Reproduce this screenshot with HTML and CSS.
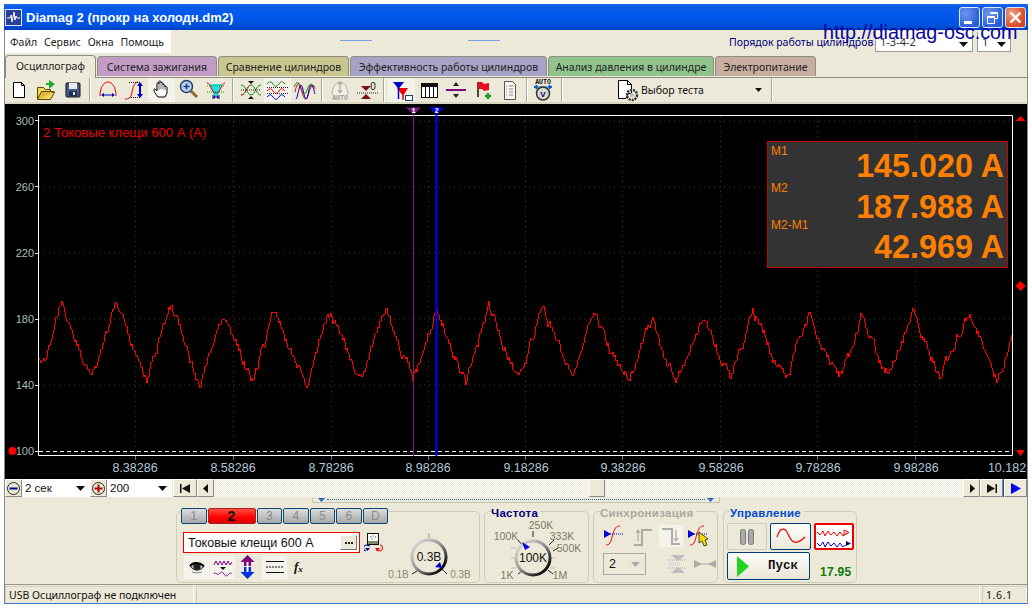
FILE: index.html
```html
<!DOCTYPE html>
<html lang="ru">
<head>
<meta charset="utf-8">
<title>Diamag 2</title>
<link rel="stylesheet" href="styles.css">
</head>
<body>
<div class="window">
  <header class="titlebar">
    <svg class="appicon" width="17" height="17" viewBox="0 0 17 17"><rect x=".5" y=".5" width="16" height="16" fill="#2a3f9a" stroke="#dfe6f5"/><path d="M2 9h3l1-3 1 7 2-10 1 8 1-4 1 2h3" fill="none" stroke="#fff"/></svg>
    <span class="apptitle">Diamag 2 (прокр на холодн.dm2)</span>
    <div class="winbtns">
      <span class="winbtn"><svg width="19" height="19" viewBox="0 0 19 19"><rect x="4" y="13" width="8" height="3" fill="#fff"/></svg></span>
      <span class="winbtn"><svg width="19" height="19" viewBox="0 0 19 19"><path d="M7.5 4.5h7v6h-3M4.5 8.5h7v7h-7zM4.5 9.5h7M7.5 5.5h7" fill="none" stroke="#fff"/></svg></span>
      <span class="winbtn close"><svg width="19" height="19" viewBox="0 0 19 19"><path d="M4.5 4.5l10 10M14.5 4.5l-10 10" stroke="#fff" stroke-width="2.4"/></svg></span>
    </div>
  </header>
  <div class="watermark">http://diamag-osc.com</div>

  <div class="menurow">
    <nav class="menu"><span>Файл</span><span>Сервис</span><span>Окна</span><span>Помощь</span></nav>
    <i class="dash dash1"></i><i class="dash dash2"></i>
    <span class="order">Порядок работы цилиндров</span>
    <span class="select order1">1-3-4-2<svg class="arrow" width="9" height="5"><path d="M0 0h9L4.500 5z" fill="#111"/></svg></span>
    <span class="select order2">1<svg class="arrow" width="9" height="5"><path d="M0 0h9L4.500 5z" fill="#111"/></svg></span>
  </div>

  <div class="tabs">
    <span class="tab active">Осциллограф</span>
    <span class="tab t2">Система зажигания</span>
    <span class="tab t3">Сравнение цилиндров</span>
    <span class="tab t4">Эффективность работы цилиндров</span>
    <span class="tab t5">Анализ давления в цилиндре</span>
    <span class="tab t6">Электропитание</span>
  </div>

  <div class="toolbar">
    <div class="tbgroup">
      <span class="tb"><svg width="24" height="24"><path d="M6.500 4.500h8l3 3v12h-11z" fill="#fff" stroke="#000"/><path d="M14.500 4.500v3h3" fill="none" stroke="#000"/></svg></span>
      <span class="tb"><svg width="24" height="24"><path d="M3.500 9.500h6l2 2h5v3h4l-4 7h-13z" fill="#f2d65c" stroke="#5c4a00"/><path d="M3.500 21.500l4-8h13" fill="#e0b93a" stroke="#5c4a00"/><path d="M15 11V7h-3V5h3V2l6 4-6 5z" fill="#22a82c"/></svg></span>
      <span class="tb"><svg width="24" height="24"><rect x="5" y="5" width="14" height="14" rx="1" fill="#4a5a86" stroke="#111"/><rect x="8" y="5" width="8" height="6" fill="#e8e8e8"/><rect x="8" y="13" width="8" height="5" fill="#22304f"/><rect x="12" y="14" width="2" height="3" fill="#dde"/></svg></span>
    </div><i class="sep"></i>
    <div class="tbgroup">
      <span class="tb"><svg width="24" height="24"><path d="M4 18C4 9 8 4 12 4s8 5 8 14" fill="none" stroke="#e00"/><path d="M5 17l3-2v1.500h8V15l3 2-3 2v-1.500H8V19z" fill="#00c"/></svg></span>
      <span class="tb"><svg width="24" height="24"><path d="M2 21c4 0 6-1 7-7s3-10 6-10" fill="none" stroke="#e00"/><path d="M6 4.500h12M6 19.500h12" stroke="#222" stroke-dasharray="1 1"/><path d="M16 12V8h-2l3-4 3 4h-2v8h2l-3 4-3-4h2z" fill="#00c"/></svg></span>
      <span class="tb sunken"><svg width="24" height="24"><path d="M8 19c-2-3-4-5-4-7s2-1 3 1V6c0-2 2-2 2 0v-2c0-2 2-1 2 0v1c0-1 2-1 2 1v1c0-1 2-1 2 1v1c0-1 2-1 2 1v5l-2 4z" fill="#fff" stroke="#000"/><path d="M9 6v6M11 5v6M13 6v5M15 8v4" stroke="#000" stroke-width=".6"/></svg></span>
      <span class="tb"><svg width="24" height="24"><circle cx="9.500" cy="8.500" r="6" fill="#b9d0ee" stroke="#23406e" stroke-width="1.500"/><path d="M6.500 8.500h6M9.500 5.500v6" stroke="#1c3f8c" stroke-width="1.500"/><path d="M14 13l6 6" stroke="#8a6a30" stroke-width="3"/></svg></span>
      <span class="tb"><svg width="24" height="24"><path d="M6 6h12l-2 7-2 5H10l-2-5z" fill="#22e0e8"/><path d="M3 8h18M3 14h18" stroke="#0a0" stroke-dasharray="1 1"/><path d="M3 5c4 0 4 10 9 10s5-10 9-10" fill="none" stroke="#e00"/><path d="M9 17v4M15 17v4" stroke="#111"/><path d="M9 19l2-2v1.500h2V17l2 2-2 2v-1.500h-2V21z" fill="#00c"/></svg></span>
    </div><i class="sep"></i>
    <div class="tbgroup">
      <span class="tb"><svg width="24" height="24"><path d="M2 7c5 0 6 10 10 10s5-10 10-10M2 17c5 0 6-10 10-10s5 10 10 10" fill="none" stroke="#0a8a0a"/><path d="M2 17c5 0 6-10 10-10" fill="none" stroke="#e00" stroke-dasharray="3 2"/><path d="M2 12h20" stroke="#222" stroke-dasharray="1 1"/><path d="M9 3h6l-3 3zM9 21h6l-3-3z" fill="#111"/></svg></span>
      <span class="tb sunken"><svg width="24" height="24"><path d="M1 6c3-3 4-3 6 0s4 3 6 0 3-3 6 0" fill="none" stroke="#0a8a0a"/><path d="M1 9.500h21M1 15.500h21" stroke="#222" stroke-dasharray="1 1"/><path d="M1 13c3-3 4-3 6 0s4 3 6 0 3-3 6 0" fill="none" stroke="#e00"/><path d="M1 19c3-3 4-3 6 0s4 3 6 0 3-3 6 0" fill="none" stroke="#00d"/></svg></span>
      <span class="tb"><svg width="24" height="24"><path d="M1 9c3-7 5-5 7 1s4 8 6 2 4-8 8-3" fill="none" stroke="#0a8a0a"/><path d="M2 14c2-10 4-10 6-3s3 10 5 10 3-9 5-12 3 0 4 2" fill="none" stroke="#e00"/><path d="M3 21c2-2 3-14 5-14s3 14 5 14 3-14 5-14 3 6 4 9" fill="none" stroke="#00c"/></svg></span>
    </div><i class="sep"></i>
    <div class="tbgroup">
      <span class="tb"><svg width="24" height="24"><path d="M4 17C4 9 8 4 12 4s8 5 8 13" fill="#f0eee2" stroke="#aaa"/><path d="M12 5v9M10 7l2-3 2 3M10 12l2 3 2-3" fill="none" stroke="#999"/><text x="12" y="22" class="autotext dim">AUTO</text></svg></span>
      <span class="tb"><svg width="24" height="24"><path d="M6 9h10l-5 5z" fill="#7a1010" transform="translate(0 -1)"/><path d="M6 21h10l-5-5z" fill="#7a1010"/><path d="M2 15h22" stroke="#222" stroke-dasharray="1 1"/><text x="18" y="12" class="zero">0</text></svg></span>
    </div><i class="sep"></i>
    <div class="tbgroup">
      <span class="tb sunken"><svg width="24" height="24"><path d="M3 4h11l-5.500 7z" fill="#00c"/><path d="M7 10h11l-5 8z" fill="#e00"/><path d="M8.500 10v11" stroke="#00c" stroke-width="1.500"/><path d="M13 17v5" stroke="#e00" stroke-width="1.500"/><rect x="15.500" y="17.500" width="7" height="5" fill="#fff" stroke="#246"/></svg></span>
      <span class="tb"><svg width="24" height="24"><rect x="4.500" y="5.500" width="16" height="14" fill="#fff" stroke="#111"/><path d="M4 6h17v3H4z" fill="#111"/><path d="M8.500 9v10M12.500 9v10M16.500 9v10" stroke="#111"/></svg></span>
      <span class="tb"><svg width="24" height="24"><path d="M2 12h20" stroke="#800080" stroke-width="2"/><path d="M9 8h6l-3-4zM9 16h6l-3 4z" fill="#222"/></svg></span>
      <span class="tb"><svg width="24" height="24"><path d="M7 4v15" stroke="#111" stroke-width="1.500"/><path d="M7 4h4l2 2 5-1v7l-5 1-2-2H7z" fill="#e8101e"/><path d="M14 18h6M17 15v6" stroke="#1a9a20" stroke-width="2.400"/></svg></span>
      <span class="tb"><svg width="24" height="24"><path d="M6.500 3.500h8l3 3v15h-11z" fill="#f7f6ef" stroke="#555"/><path d="M8 8h1M11 8h4M8 11h1M11 11h4M8 14h1M11 14h4M8 17h1M11 17h4" stroke="#888"/></svg></span>
    </div><i class="sep"></i>
    <div class="tbgroup g6">
      <span class="tb"><svg width="24" height="24"><text x="12" y="6" class="autotext">AUTO</text><path d="M3 9h18M3 9l3-2v4zM21 9l-3-2v4z" fill="#00c" stroke="#06c"/><circle cx="12" cy="15.500" r="6.500" fill="#d9d7c8" stroke="#333" stroke-width="1.500"/><text x="12" y="18.500" class="vtext">V</text></svg></span>
    </div><i class="sep sep6"></i>
    <div class="testsel">
      <svg class="testico" width="26" height="24"><path d="M3.500 2.500h9l4 4v9h-3l-3 5h-7z" fill="#fff" stroke="#000"/><path d="M12.500 2.500v4h4" fill="none" stroke="#000"/><circle cx="17" cy="17" r="5" fill="none" stroke="#333" stroke-width="2.500" stroke-dasharray="2 1"/><circle cx="17" cy="17" r="2" fill="#bbb"/></svg>
      <span class="testlabel">Выбор теста</span>
      <svg class="testarrow" width="7" height="4"><path d="M0 0h7L3.500 4z" fill="#111"/></svg>
    </div><i class="sep"></i>
  </div>

  <section class="scope">
    <svg class="plot" width="1022" height="375" viewBox="5 104 1022 375">
      <rect x="5" y="104" width="1022" height="375" fill="#000"/>
      <g class="grid">
        <path d="M39 121H1012M39 187H1012M39 253H1012M39 319H1012M39 385H1012"/>
        <path d="M135.500 116V455M233.500 116V455M331.500 116V455M428.500 116V455M525.500 116V455M622.500 116V455M720.500 116V455M817.500 116V455M915.500 116V455"/>
      </g>
      <polyline id="trace" class="trace" points=""/>
      <path d="M38.500 115.500H1012.500V455.500H38.500z" fill="none" stroke="#fff"/>
      <path d="M39 451.500H1012" stroke="#fff" stroke-dasharray="4 3"/>
      <path d="M35 120.500h3M35 186.500h3M35 253.500h3M35 319.500h3M35 385.500h3M35 451.500h3" stroke="#ddd"/>
      <path d="M135.500 456v4M233.500 456v4M331.500 456v4M428.500 456v4M525.500 456v4M622.500 456v4M720.500 456v4M817.500 456v4M915.500 456v4" stroke="#777"/>
      <g class="ylabels">
        <text x="34" y="125">300</text><text x="34" y="191">260</text><text x="34" y="257">220</text>
        <text x="34" y="323">180</text><text x="34" y="389">140</text><text x="34" y="455">100</text>
      </g>
      <g class="xlabels">
        <text x="135" y="472">8.38286</text><text x="233" y="472">8.58286</text><text x="331" y="472">8.78286</text>
        <text x="428" y="472">8.98286</text><text x="526" y="472">9.18286</text><text x="623" y="472">9.38286</text>
        <text x="721" y="472">9.58286</text><text x="818" y="472">9.78286</text><text x="916" y="472">9.98286</text><text x="1014" y="472">10.18286</text>
      </g>
      <path d="M413.500 107V456" stroke="#7a1f7a"/>
      <path d="M436.500 107V456" stroke="#0000ff" stroke-width="2"/>
      <path d="M406 107.500h15l-7.500 7z" fill="#7a1f7a"/>
      <path d="M429 107.500h15l-7.500 7z" fill="#0000ee"/>
      <text x="413.500" y="113" class="curnum">1</text>
      <text x="436.500" y="113" class="curnum">2</text>
      <text x="43" y="137" class="chname">2 Токовые клещи 600 А (А)</text>
      <path d="M1020.500 116l5 5h-10z" fill="#f00"/>
      <path d="M1020.500 281l5 5-5 5-5-5z" fill="#f00"/>
      <path d="M1016 450h9l-4.500 6z" fill="#f00"/>
      <circle cx="12.500" cy="451" r="4" fill="#f00"/>
    </svg>
    <div class="measure">
      <div class="mlabels"><span>M1</span><span>M2</span><span>M2-M1</span></div>
      <div class="mvals"><span>145.020 A</span><span>187.988 A</span><span>42.969 A</span></div>
    </div>
  </section>

  <div class="transport">
    <span class="roundbtn"><svg width="15" height="15"><circle cx="7.500" cy="7.500" r="6" fill="#ece9d8" stroke="#222"/><rect x="3.500" y="6.500" width="8" height="2" fill="#00008b"/></svg></span>
    <span class="tsel w68">2 сек<svg class="arrow" width="9" height="5"><path d="M0 0h9L4.500 5z" fill="#111"/></svg></span>
    <span class="roundbtn"><svg width="15" height="15"><circle cx="7.500" cy="7.500" r="6" fill="#ece9d8" stroke="#222"/><path d="M3.500 7.500h8M7.500 3.500v8" stroke="#a00" stroke-width="2"/></svg></span>
    <span class="tsel w64">200<svg class="arrow" width="9" height="5"><path d="M0 0h9L4.500 5z" fill="#111"/></svg></span>
    <span class="sbtn w22"><svg width="12" height="9"><path d="M1 0h1.500v9H1zM11 0v9L3 4.500z" fill="#111"/></svg></span>
    <span class="sbtn w17"><svg width="6" height="9"><path d="M5 0v9L0 4.500z" fill="#111"/></svg></span>
    <div class="track"><span class="thumb"></span></div>
    <span class="sbtn w17"><svg width="6" height="9"><path d="M1 0v9l5-4.500z" fill="#111"/></svg></span>
    <span class="sbtn w23"><svg width="12" height="9"><path d="M11 0H9.500v9H11zM1 0v9l8-4.500z" fill="#111"/></svg></span>
    <span class="sbtn w23 play"><svg width="10" height="11"><path d="M0 0v11l10-5.500z" fill="#0000f0"/></svg></span>
  </div>

  <div class="lower">
    <div class="splitter"><svg class="sp-l" width="7" height="4"><path d="M0 0h7L3.500 4z" fill="#2468c8"/></svg><i class="sp-dots"></i><svg class="sp-r" width="7" height="4"><path d="M0 0h7L3.500 4z" fill="#2468c8"/></svg></div>
    <div class="panels">
      <div class="panel pch">
        <div class="chleft">
          <div class="chtabs">
            <span class="chtab">1</span><span class="chtab on">2</span><span class="chtab">3</span><span class="chtab">4</span><span class="chtab">5</span><span class="chtab">6</span><span class="chtab">D</span>
          </div>
          <div class="chcombo-row">
            <div class="chcombo"><span>Токовые клещи 600 А</span><b class="dots"><i></i><i></i><i></i></b></div>
            <svg width="20" height="20" viewBox="0 0 20 20"><rect x="3.500" y=".5" width="11" height="11" fill="#fff" stroke="#111"/><path d="M4 8h10v3H4z" fill="#7a8a70"/><path d="M6 3l3 4M9 2v2M12 3l-1 2" stroke="#555" stroke-width=".7"/><path d="M2 18a2.500 3 0 0 1 0-6l4 1" fill="none" stroke="#00a"/><path d="M16 12a2.500 3 0 0 1 0 6l-4-1" fill="none" stroke="#e00"/><path d="M1 15h5l-2.500 3z" fill="#00a"/><path d="M11 15h5l-2.500 3z" fill="#e00"/></svg>
          </div>
          <div class="chtools">
            <span class="ctool sunken"><svg width="20" height="14"><path d="M3 6c3-4 9-4 14 0-3 5-10 6-14 0z" fill="#bbb" stroke="#111"/><circle cx="10" cy="6.500" r="3.500" fill="#222"/><path d="M3 6c3-4 9-4 14 0" fill="none" stroke="#000" stroke-width="2"/><path d="M5 12c2 1 8 1 10 0" stroke="#888" fill="none"/></svg></span>
            <span class="ctool sunken"><svg width="20" height="20"><path d="M1 8l2-4 2 4 2-4 2 4 2-4 2 4 2-4 2 4 2-3" fill="none" stroke="#800080"/><path d="M1 17c2-3 3 2 5 0s3-3 5 0 3 2 5 0 2-1 3 0" fill="none" stroke="#800080"/><path d="M7 10h6l-3 3z" fill="#111"/></svg></span>
            <span class="cicon"><svg width="17" height="24"><path d="M8.500 0l7 7H12v4H5V7H1.500z" fill="#800080"/><path d="M8.500 24l-7-7H5v-5h7v5h3.500z" fill="#0030e0"/><rect x="7.500" y="7" width="2" height="10" fill="#fff"/></svg></span>
            <span class="ctool sunken lines"><svg width="20" height="18"><path d="M1 3.500h18M1 14.500h18" stroke="#111"/><path d="M1 9h18" stroke="#111" stroke-dasharray="2 1"/></svg></span>
            <span class="fx"><i>f</i><sub>x</sub></span>
          </div>
        </div>
        <svg class="knob k1" width="92" height="52" viewBox="385 530 92 52">
          <defs><linearGradient id="ring" x1="0" y1="0" x2="1" y2="1"><stop offset="0" stop-color="#e8e8e8"/><stop offset=".45" stop-color="#999"/><stop offset=".85" stop-color="#111"/><stop offset="1" stop-color="#000"/></linearGradient></defs>
          <path d="M429 533v5" stroke="#999"/>
          <path d="M412 574l5-3M442 569l5 5" stroke="#222"/>
          <circle cx="429" cy="557" r="17" fill="#ece9d8" stroke="url(#ring)" stroke-width="3"/>
          <path d="M440 562l2 6-7-1z" fill="#0000e0"/>
          <text x="429" y="561" class="ktext">0.3В</text>
          <text x="398.500" y="578" class="klabel">0.1В</text>
          <text x="460.500" y="578" class="klabel">0.3В</text>
        </svg>
      </div>

      <div class="panel pfreq">
        <div class="ptitle navy">Частота</div>
        <svg class="knob k2" width="100" height="64" viewBox="487 518 100 64">
          <g stroke="#bbb"><path d="M511 547h5M511 557h5M511 567h5M550 547h5M550 557h5M550 567h5"/></g>
          <g stroke="#222"><path d="M533 530v6M518 539l5 6M549 544l5-5M553 550l5-3M518 573l5-4M548 569l5 4"/></g>
          <circle cx="533" cy="557" r="17" fill="#ece9d8" stroke="url(#ring)" stroke-width="3"/>
          <path d="M522 541l3 8 5-3z" fill="#0000e0"/>
          <text x="533" y="561" class="ktext">100K</text>
          <g class="klabel2">
            <text x="506" y="539">100K</text><text x="541" y="528">250K</text><text x="562" y="539">333K</text>
            <text x="569" y="551">500K</text><text x="507" y="578">1K</text><text x="560" y="578">1M</text>
          </g>
        </svg>
      </div>

      <div class="panel psync">
        <div class="ptitle gray">Синхронизация</div>
        <div class="syncrow">
          <span class="sico"><svg width="24" height="22"><path d="M3 20c5 0 5-5 7-11s3-8 7-8" fill="none" stroke="#e00"/><path d="M7 9h14" stroke="#00c" stroke-dasharray="1 1"/><path d="M1 5l7 4-7 4z" fill="#00c"/></svg></span>
          <span class="sico"><svg width="24" height="22"><path d="M3 20h8V5h10" fill="none" stroke="#aaa" stroke-width="2"/><path d="M7 5v11M5 8l2-3 2 3" fill="none" stroke="#999"/></svg></span>
          <span class="sico sunken"><svg width="24" height="22"><path d="M3 4h10v15h8" fill="none" stroke="#aaa" stroke-width="2"/><path d="M17 5v11M15 13l2 3 2-3" fill="none" stroke="#999"/></svg></span>
          <span class="sico"><svg width="24" height="22"><path d="M3 20c5 0 5-5 7-11s3-8 7-8" fill="none" stroke="#e00"/><path d="M7 9h14" stroke="#00c" stroke-dasharray="1 1"/><path d="M1 5l7 4-7 4z" fill="#00c"/><path d="M12 7l9 7-3 1 2 5-3 1-2-5-3 2z" fill="#ffd800" stroke="#222" stroke-width=".8"/></svg></span>
        </div>
        <div class="syncrow second">
          <span class="syncsel">2<svg width="9" height="5"><path d="M0 0h9L4.500 5z" fill="#aaa"/></svg></span>
          <span class="sico"><svg width="24" height="22"><path d="M3 7h17M3 15h17" stroke="#aaa" stroke-dasharray="1 1"/><path d="M6 2h14l-7 6zM6 20h14l-7-6z" fill="#bbb"/><path d="M3 11h12" stroke="#ddd" stroke-width="3"/></svg></span>
          <span class="sico"><svg width="24" height="22"><path d="M1 7l8 4-8 4zM23 7l-8 4 8 4z" fill="#aaa"/><path d="M4 11h16" stroke="#aaa"/></svg></span>
        </div>
      </div>

      <div class="panel pctl">
        <div class="ptitle blue">Управление</div>
        <div class="ctlrow">
          <span class="cbtn flat"><svg width="14" height="16"><rect x=".5" y=".5" width="5" height="15" rx="2" fill="#aaa" stroke="#777"/><rect x="8.500" y=".5" width="5" height="15" rx="2" fill="#aaa" stroke="#777"/></svg></span>
          <span class="cbtn navyb"><svg width="30" height="22"><path d="M1 11C4 1 9 1 12 8s7 13 17 3" fill="none" stroke="#e00" stroke-width="1.200"/></svg></span>
          <span class="cbtn redb"><svg width="36" height="22"><path d="M1 6l3 3 3-4 2 5 3-5 3 4 3-3 3 4 3-4 3 4 4-3M28 4v5l5-2.500z" fill="none" stroke="#e00"/><path d="M1 17l3 3 3-4 2 5 3-5 3 4 3-3 3 4 3-4 3 4 4-3" fill="none" stroke="#00c"/><path d="M30 15v5l5-2.500z" fill="#005"/></svg></span>
        </div>
        <div class="ctlrow run">
          <span class="startbtn"><svg width="12" height="21"><path d="M0 0v21l12-10.500z" fill="#22d422"/></svg><b>Пуск</b></span>
          <span class="fps">17.95</span>
        </div>
      </div>
    </div>
  </div>

  <footer class="status">
    <span class="st st1">USB Осциллограф не подключен</span>
    <span class="st st2"></span>
    <span class="st st3">1.6.1</span>
  </footer>
</div>
<script src="scope.js"></script>
</body>
</html>
```
FILE: styles.css
```css
* { box-sizing: border-box; }
html, body { margin: 0; padding: 0; background: #fff; }
body { font-family: "Noto Sans", "Liberation Sans", sans-serif; font-size: 11px; color: #111; overflow: hidden; }
.window { position: relative; width: 1024px; height: 600px; margin: 4px 0 0 4px; background: #ece9d8; border-left: 1px solid #8a8a8a; border-right: 1px solid #8a8a8a; display: flex; flex-direction: column; border-bottom: 1px solid #3a78cc; }

.titlebar { height: 26px; flex: none; margin-left: -1px; margin-right: -1px; display: flex; align-items: center; padding: 1px 2px 0 1px; background: linear-gradient(180deg, #1a6ae6 0, #0a5ae8 12%, #0058ee 45%, #0052e0 80%, #0040bd 100%); color: #fff; }
.appicon { margin-right: 4px; }
.apptitle { font: bold 13px "Liberation Sans", sans-serif; white-space: nowrap; }
.winbtns { margin-left: auto; display: flex; gap: 2px; }
.winbtn { width: 21px; height: 21px; border: 1px solid #dfe8fb; border-radius: 3px; background: radial-gradient(circle at 30% 30%, #6f99ee, #2f5fd8 70%, #2a54c4); display: flex; align-items: center; justify-content: center; }
.winbtn.close { background: radial-gradient(circle at 30% 30%, #f0a088, #e0532a 60%, #c43c18); }
.watermark { position: absolute; left: 818px; top: 17px; font: 19.800px "Liberation Sans", sans-serif; color: #0808a0; white-space: nowrap; z-index: 3; }

.menurow { height: 23px; flex: none; display: flex; align-items: center; position: relative; }
.menu { width: 166px; height: 23px; background: #fff; display: flex; align-items: center; padding-left: 5px; gap: 7px; font-size: 10.500px; color: #222; }
.dash { height: 1px; width: 32px; background: #7b9fe6; margin-top: -3px; flex: none; }
.dash1 { margin-left: 169px; }
.dash2 { margin-left: 96px; }
.order { margin-left: 229px; color: #000080; white-space: nowrap; width: 146px; font-size: 10.500px; }
.select { height: 21px; margin-top: -1px; background: #fff; border: 1px solid #9a9a9a; border-top-color: #fff; display: flex; align-items: center; padding: 0 4px; font-size: 11px; position: relative; color: #333; }
.order1 { width: 98px; }
.order2 { width: 34px; margin-left: 4px; }
.arrow { margin-left: auto; flex: none; }
.select .arrow { margin-top: 6px; }

.tabs { height: 24px; flex: none; display: flex; align-items: flex-end; gap: 1px; position: relative; z-index: 1; }
.tab { height: 20px; border: 1px solid #8f8d80; border-bottom: none; border-radius: 4px 4px 0 0; display: flex; align-items: center; justify-content: center; font-size: 10.500px; color: #222; white-space: nowrap; margin-bottom: 1px; }
.tab.active { width: 91px; height: 23px; background: #ece9d8; margin-bottom: -1px; padding-bottom: 2px; }
.t2 { width: 120px; background: #c39cc6; }
.t3 { width: 131px; background: #c9c78f; }
.t4 { width: 197px; background: #a6a3c6; }
.t5 { width: 166px; background: #90c48c; }
.t6 { width: 101px; background: #c8ae9f; }

.toolbar { height: 27px; flex: none; display: flex; align-items: center; border-top: 1px solid #8f8d80; border-bottom: 2px solid #d8d5c4; }
.tbgroup { display: flex; padding: 0 3px; }
.tbgroup:first-child { padding-left: 0; }
.g6 { padding: 0 1px; }
.tb { width: 27px; height: 24px; display: flex; align-items: center; justify-content: center; }
.sunken { background: repeating-conic-gradient(#fff 0 25%, #ece9d8 0 50%) 0 0 / 2px 2px; box-shadow: inset 0 0 0 1px #f6f5ee; }
.sep { width: 1px; height: 24px; background: #a9a79a; box-shadow: 1px 0 #fff; flex: none; margin-right: 1px; }
.sep6 { margin-left: 4px; }
.autotext { font: bold 6.500px "Liberation Mono", monospace; text-anchor: middle; fill: #111; }
.autotext.dim { fill: #999; }
.zero { font: 10px "Liberation Sans", sans-serif; fill: #111; text-anchor: middle; }
.vtext { font: bold 8px "Liberation Sans", sans-serif; text-anchor: middle; fill: #00a; }
.testsel { width: 208px; height: 24px; display: flex; align-items: center; padding-left: 52px; }
.testico { flex: none; }
.testlabel { font-size: 10.500px; white-space: nowrap; }
.testarrow { margin-left: auto; margin-right: 9px; flex: none; }

.scope { height: 375px; flex: none; position: relative; background: #000; }
.plot { display: block; }
.grid path { stroke: #3c3c18; fill: none; stroke-dasharray: 1 4; }
.trace { fill: none; stroke: #f00; stroke-width: 1; shape-rendering: crispEdges; }
.ylabels text { font: 11px "Liberation Sans", sans-serif; fill: #a9bdb8; text-anchor: end; }
.xlabels text { font: 12.500px "Liberation Sans", sans-serif; fill: #b4c8d8; text-anchor: middle; }
.curnum { font: bold 7px "Liberation Mono", monospace; fill: #fff; text-anchor: middle; }
.chname { font: 13.100px "Liberation Sans", sans-serif; fill: #e80000; }
.measure { position: absolute; left: 762px; top: 37px; width: 241px; height: 127px; background: #333; border: 1px solid #f00; outline: 1px solid #c00; outline-offset: -1px; display: grid; color: #ff8000; }
.mlabels, .mvals { grid-area: 1 / 1; display: flex; flex-direction: column; }
.mlabels { padding: 2px 0 0 3px; gap: 23px; font: 12px/14px "Liberation Sans", sans-serif; }
.mvals { padding: 4px 3px 0 0; font: bold 32.300px/40.500px "Liberation Sans", sans-serif; text-align: right; }

.transport { height: 18px; flex: none; display: flex; align-items: stretch; }
.roundbtn { width: 17px; background: #ece9d8; border: 1px solid #fff; border-right-color: #888; border-bottom-color: #888; display: flex; align-items: center; justify-content: center; }
.tsel { background: #fff; display: flex; align-items: center; padding: 0 5px 0 3px; font: 11.500px "Liberation Sans", sans-serif; }
.w68 { width: 68px; }
.w64 { width: 65px; }
.sbtn { background: #ece9d8; border: 1px solid #fff; border-right-color: #888; border-bottom-color: #888; display: flex; align-items: center; justify-content: center; flex: none; }
.w22 { width: 24px; margin-left: 1px; }
.w17 { width: 17px; }
.w23 { width: 23px; }
.play { box-shadow: -1px 0 #1050d0; margin-left: 1px; }
.track { flex: 1; background: repeating-conic-gradient(#fff 0 25%, #ece9d8 0 50%) 0 0 / 2px 2px; position: relative; }
.thumb { position: absolute; left: 375px; top: 0; width: 16px; height: 18px; background: #ece9d8; border: 1px solid #fff; border-right-color: #888; border-bottom-color: #888; }

.lower { height: 88px; flex: none; border-bottom: 1px solid #9a9888; }
.splitter { height: 6px; width: 408px; margin-left: 307px; border: 1px solid #c9c6b4; border-top: none; display: flex; align-items: center; gap: 2px; padding: 0 5px; }
.sp-dots { flex: 1; border-top: 1px dotted #2468c8; }
.sp-l, .sp-r { flex: none; }
.panels { display: flex; gap: 4px; margin: 8px 0 0 171px; align-items: flex-start; }
.panel { height: 72px; border: 1px solid #cfccb8; border-radius: 5px; flex: none; }
.pch { width: 304px; display: flex; padding-left: 6px; }
.pfreq { width: 105px; }
.psync { width: 125px; }
.pctl { width: 134px; margin-left: 1px; }
.ptitle { font: bold 11.500px/12px "Liberation Sans", sans-serif; display: table; background: #ece9d8; margin: -5px 0 0 6px; padding-right: 2px; letter-spacing: .3px; }
.navy { color: #000080; }
.gray { color: #a8a8a0; }
.blue { color: #0048d0; }

.chleft { width: 207px; flex: none; display: flex; flex-direction: column; margin-left: -2px; }
.chtabs { display: flex; gap: 1px; margin-top: -4px; height: 16px; }
.chtab { width: 26px; border: 1px solid #0a4a7a; border-radius: 2px; background: linear-gradient(180deg, #dcdcdc, #a8a8a8); color: #8a8a8a; font: 12px "Liberation Sans", sans-serif; display: flex; align-items: center; justify-content: center; }
.chtab.on { width: 49px; background: linear-gradient(180deg, #ff5040 0, #f00 60%, #d00 100%); color: #111; font-weight: bold; font-size: 14px; border-color: #aa2020; }
.chcombo-row { display: flex; gap: 4px; margin: 8px 0 0 2px; align-items: center; }
.chcombo { width: 177px; height: 21px; border: 1px solid #e00; outline: 1px solid #e00; outline-offset: -1px; background: #fff; display: flex; align-items: center; justify-content: space-between; padding: 0 2px 0 4px; font: 12.500px "Liberation Sans", sans-serif; }
.dots { width: 17px; height: 15px; background: #ece9d8; border: 1px solid #fff; border-right-color: #777; border-bottom-color: #777; display: flex; align-items: center; justify-content: center; gap: 1px; }
.dots i { width: 2px; height: 2px; background: #222; }
.chtools { display: flex; align-items: center; margin: 2px 0 0 3px; gap: 1px; height: 24px; }
.ctool { width: 25px; height: 23px; display: flex; align-items: center; justify-content: center; }
.cicon { margin: 0 5px 0 3px; display: flex; }
.fx { margin-left: 6px; font: bold 13px "Liberation Serif", serif; }
.fx sub { font-size: 9px; vertical-align: -1px; font-style: italic; }
.knob { flex: none; display: block; }
.k1 { margin: 18px 0 0 -3px; }
.k2 { margin: 0 0 0 2px; }
.ktext { font: 12px "Liberation Sans", sans-serif; text-anchor: middle; fill: #111; }
.klabel { font: 10px "Liberation Sans", sans-serif; text-anchor: middle; fill: #8a8a6a; }
.klabel2 text { font: 10.500px "Liberation Sans", sans-serif; text-anchor: middle; fill: #7a7a68; }

.syncrow { display: flex; align-items: center; padding-left: 9px; margin-top: 6px; gap: 4px; }
.sico { width: 24px; height: 22px; display: flex; align-items: center; justify-content: center; }
.second { margin-top: 6px; }
.syncsel { width: 47px; height: 22px; border: 1px solid #aaa; display: flex; align-items: center; justify-content: space-between; padding: 0 5px; font: 12.500px "Liberation Sans", sans-serif; margin-right: 15px; }

.ctlrow { display: flex; gap: 3px; padding-left: 3px; margin-top: 4px; }
.cbtn { width: 40px; height: 27px; border-radius: 2px; display: flex; align-items: center; justify-content: center; flex: none; }
.flat { border: 1px solid #cfccb8; }
.navyb { border: 1px solid #003c74; background: linear-gradient(180deg, #fff, #ece9d8); width: 41px; }
.redb { border: 2px solid #e00; background: #fff; }
.run { margin-top: 2px; align-items: center; }
.startbtn { width: 83px; height: 28px; border: 1px solid #003c74; border-radius: 2px; background: linear-gradient(180deg, #fff, #e8e5d4); display: flex; align-items: center; padding-left: 9px; flex: none; }
.startbtn b { margin-left: 19px; font: bold 12.500px "Liberation Mono", monospace; color: #111; }
.fps { margin: 11px 0 0 7px; font: bold 12px "Liberation Sans", sans-serif; letter-spacing: .3px; color: #0a7a0a; }

.status { flex: 1; display: flex; align-items: stretch; }
.st { border: 1px solid #d4d1bf; border-left-color: #cfccb8; border-right-color: #fff; border-bottom: none; margin-top: 1px; font-size: 10.500px; display: flex; align-items: center; white-space: nowrap; padding-left: 3px; }
.st1 { width: 189px; }
.st2 { width: 784px; margin-left: 2px; }
.st3 { flex: 1; margin-left: 2px; letter-spacing: .6px; }
```
FILE: scope.js
```js
// Key points of the recorded signal: [x, y] alternating troughs and peaks.
var KEYS = [[39,357],[42,363],[46,358],[50,345],[62,297],[75,340],[92,377],[116,302],[130,340],[147,380],[171,302],[185,345],[200,386],[223,314],[238,350],[253,380],[275,311],[290,350],[307,381],[331,311],[345,345],[361,380],[386,306],[398,340],[413,380],[437,306],[450,345],[466,382],[489,308],[503,345],[519,376],[543,309],[558,345],[572,377],[594,311],[612,355],[628,381],[652,315],[665,355],[677,379],[704,314],[718,350],[731,378],[753,311],[770,350],[787,380],[797,347],[802,340],[810,310],[822,345],[839,380],[863,314],[876,350],[889,377],[914,310],[926,345],[940,377],[968,314],[982,345],[997,380],[1012,340]];
var seed = 20240611;
function rnd() {
  seed = (seed * 1664525 + 1013904223) >>> 0;
  return seed / 4294967296 - 0.5;
}
function baseAt(x) {
  for (var i = 1; i < KEYS.length; i++) {
    if (x <= KEYS[i][0]) {
      var a = KEYS[i - 1], b = KEYS[i];
      return a[1] + (b[1] - a[1]) * (x - a[0]) / (b[0] - a[0]);
    }
  }
  return KEYS[KEYS.length - 1][1];
}
var pts = [], drift = 0;
for (var x = 39; x <= 1012; x++) {
  drift = drift * 0.7 + rnd() * 8;
  var y = Math.round(baseAt(x) + drift + rnd() * 3);
  pts.push(x + "," + y);
}
document.getElementById("trace").setAttribute("points", pts.join(" "));
```
